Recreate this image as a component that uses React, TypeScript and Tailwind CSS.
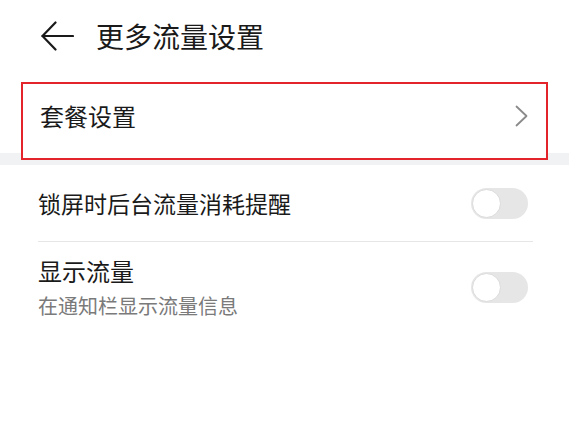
import React from "react";

function Toggle() {
  return (
    <div className="mr-[5px] flex h-[31px] w-[57px] shrink-0 items-center rounded-full bg-[#e6e6e6] p-[1px]">
      <div className="h-[29px] w-[29px] rounded-full border border-[#dadada] bg-white" />
    </div>
  );
}

export default function App() {
  return (
    <div
      className="h-[427px] w-[569px] overflow-hidden bg-white text-[#1a1a1a]"
      style={{ fontFamily: '"Noto Sans CJK SC", "Noto Sans", sans-serif' }}
    >
      <div className="flex h-[72px] items-center pl-[41px]">
        <svg width="33" height="30" viewBox="0 0 33 30" fill="none" stroke="#1a1a1a" strokeWidth="2.2" strokeLinecap="round" strokeLinejoin="round">
          <path d="M1.5 15H32" />
          <path d="M14.5 1.5L1.5 15L14.5 28.5" />
        </svg>
        <span className="ml-[22px] text-[28px] leading-none">更多流量设置</span>
      </div>

      <div className="relative pt-[10px] pb-[5px]">
        <div className="absolute inset-x-0 bottom-0 h-[12px] bg-[#f1f2f3]" />
        <div className="relative ml-[21px] flex h-[78px] w-[527px] items-center justify-between border-2 border-[#e3242b] bg-white pb-[11px] pl-[17px] pr-[18px]">
          <span className="text-[24px] leading-none">套餐设置</span>
          <svg width="13" height="22" viewBox="0 0 13 22" fill="none" stroke="#8a8a8a" strokeWidth="1.8" strokeLinecap="round" strokeLinejoin="round">
            <path d="M1.5 1.5L11.5 11L1.5 20.5" />
          </svg>
        </div>
      </div>

      <div className="ml-[38px] mr-[36px]">
        <div className="flex h-[77px] items-center justify-between border-b border-[#e6e6e6]">
          <span className="text-[23px] leading-none">锁屏时后台流量消耗提醒</span>
          <Toggle />
        </div>
        <div className="flex h-[91px] items-center justify-between">
          <div className="flex flex-col pb-[1px]">
            <span className="text-[24px] leading-[30px]">显示流量</span>
            <span className="mt-[7px] text-[20px] leading-[26px] text-[#7a7a7a]">在通知栏显示流量信息</span>
          </div>
          <Toggle />
        </div>
      </div>
    </div>
  );
}
